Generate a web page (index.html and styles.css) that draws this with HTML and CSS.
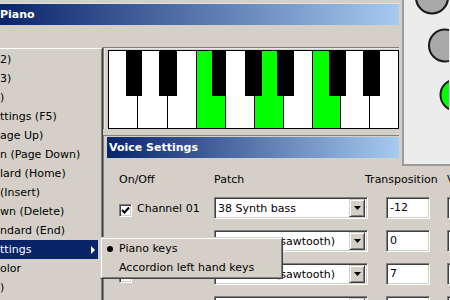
FILE: index.html
```html
<!DOCTYPE html>
<html>
<head>
<meta charset="utf-8">
<title>Piano</title>
<link rel="stylesheet" href="styles.css">
</head>
<body>
<div class="window">
  <div class="frame-top"></div>
  <div class="titlebar"><span class="title">Piano</span></div>
  <div class="menubar"></div>
  <div class="kbd-wrap">
    <svg class="kbd" width="291" height="79" viewBox="0 0 291 79">
      <rect x="0" y="0" width="291" height="79" fill="#fff"/>
      <rect x="88" y="0" width="29" height="79" fill="#00ff00"/>
      <rect x="146" y="0" width="29" height="79" fill="#00ff00"/>
      <rect x="204" y="0" width="28" height="79" fill="#00ff00"/>
      <g stroke="#000" stroke-width="1" fill="none">
        <path d="M29.5 0V79M59.5 0V79M88.5 0V79M117.5 0V79M146.5 0V79M175.5 0V79M204.5 0V79M232.5 0V79M261.5 0V79"/>
        <rect x="0.5" y="0.5" width="290" height="78"/>
      </g>
      <g fill="#000">
        <rect x="18" y="0" width="16" height="46"/>
        <rect x="51" y="0" width="18" height="46"/>
        <rect x="104" y="0" width="14" height="46"/>
        <rect x="137" y="0" width="17" height="46"/>
        <rect x="169" y="0" width="17" height="46"/>
        <rect x="221" y="0" width="17" height="46"/>
        <rect x="255" y="0" width="17" height="46"/>
      </g>
    </svg>
  </div>
  <div class="voice">
    <div class="voice-title">Voice Settings</div>
    <div class="voice-body">
      <div class="vhead">
        <span class="h-on">On/Off</span>
        <span class="h-patch">Patch</span>
        <span class="h-trans">Transposition</span>
        <span class="h-vol">V</span>
      </div>
      <div class="vrow">
        <label class="chan"><span class="cb"><svg width="9" height="9" viewBox="0 0 9 9"><path d="M1 4 L3.5 6.5 L8 1.5" stroke="#000" stroke-width="2" fill="none"/></svg></span><span class="chan-text">Channel 01</span></label>
        <div class="select"><span class="sel-text">38 Synth bass</span><span class="sel-btn"><svg width="7" height="4" viewBox="0 0 7 4"><polygon points="0,0 7,0 3.5,4" fill="#000"/></svg></span></div>
        <div class="field">-12</div>
        <div class="field"></div>
      </div>
      <div class="vrow">
        <label class="chan"><span class="cb"></span><span class="chan-text">Channel 02</span></label>
        <div class="select"><span class="sel-text">81 Lead 2 (sawtooth)</span><span class="sel-btn"><svg width="7" height="4" viewBox="0 0 7 4"><polygon points="0,0 7,0 3.5,4" fill="#000"/></svg></span></div>
        <div class="field">0</div>
        <div class="field"></div>
      </div>
      <div class="vrow">
        <label class="chan"><span class="cb"></span><span class="chan-text">Channel 03</span></label>
        <div class="select"><span class="sel-text">81 Lead 2 (sawtooth)</span><span class="sel-btn"><svg width="7" height="4" viewBox="0 0 7 4"><polygon points="0,0 7,0 3.5,4" fill="#000"/></svg></span></div>
        <div class="field">7</div>
        <div class="field"></div>
      </div>
      <div class="vrow">
        <label class="chan"><span class="cb"></span><span class="chan-text">Channel 04</span></label>
        <div class="select"><span class="sel-text"></span><span class="sel-btn"><svg width="7" height="4" viewBox="0 0 7 4"><polygon points="0,0 7,0 3.5,4" fill="#000"/></svg></span></div>
        <div class="field"></div>
        <div class="field"></div>
      </div>
    </div>
  </div>
</div>

<div class="menu">
  <div class="mi">2)</div>
  <div class="mi">3)</div>
  <div class="mi">)</div>
  <div class="mi">ttings (F5)</div>
  <div class="mi">age Up)</div>
  <div class="mi">n (Page Down)</div>
  <div class="mi">lard (Home)</div>
  <div class="mi">(Insert)</div>
  <div class="mi">wn (Delete)</div>
  <div class="mi">ndard (End)</div>
  <div class="mi active">ttings<span class="arrow"></span></div>
  <div class="mi">olor</div>
  <div class="mi">)</div>
</div>

<div class="submenu">
  <div class="si"><span class="bullet-col"><span class="bullet"></span></span>Piano keys</div>
  <div class="si"><span class="bullet-col"></span>Accordion left hand keys</div>
</div>

<div class="side">
  <div class="side-inner">
    <svg class="lamps" width="45" height="166" viewBox="0 0 45 166">
      <circle cx="28" cy="-2.5" r="16" fill="#a8a8a8" stroke="#1a1a1a" stroke-width="2"/>
      <circle cx="41" cy="45.5" r="16" fill="#a8a8a8" stroke="#1a1a1a" stroke-width="2"/>
      <circle cx="52" cy="95" r="15.5" fill="#00ff00" stroke="#1a1a1a" stroke-width="2"/>
    </svg>
  </div>
</div>
</body>
</html>
```

FILE: styles.css
```css
html, body {
  margin: 0;
  padding: 0;
}
body {
  width: 450px;
  height: 300px;
  overflow: hidden;
  position: relative;
  background: #d4d0c8;
  font-family: "DejaVu Sans", "Liberation Sans", sans-serif;
  font-size: 11px;
  color: #000;
}
.window {
  width: 520px;
}
.frame-top {
  height: 4px;
  background: #d4d0c8;
  box-shadow: inset 0 -1px #e4e2dc;
}
.titlebar {
  height: 21px;
  background: #a6caf0 linear-gradient(to right, #0a246a, #a6caf0) no-repeat;
  background-size: 400px 100%;
}
.title {
  display: block;
  color: #fff;
  font-weight: bold;
  line-height: 21px;
}
.menubar {
  height: 22px;
  background: #d4d0c8;
}
.kbd-wrap {
  margin-left: 103px;
  border-top: 1px solid #808080;
  border-left: 1px solid #808080;
  padding: 2px 0 0 4px;
  background: #d4d0c8;
  box-shadow: inset 1px 1px #e8e8e8;
}
.kbd {
  display: block;
}
.voice {
  margin: 6px 0 0 103px;
  border-top: 1px solid #808080;
  border-left: 1px solid #808080;
  padding: 1px 0 0 3px;
}
.voice-title {
  height: 21px;
  line-height: 21px;
  padding-left: 2px;
  color: #fff;
  font-weight: bold;
  background: #a6caf0 linear-gradient(to right, #0a246a, #a6caf0) no-repeat;
  background-size: 292px 100%;
}
.voice-body {
  padding: 15px 0 0 12px;
}
.vhead {
  display: flex;
  height: 14px;
  line-height: 14px;
  margin-bottom: 10px;
}
.h-on { width: 95px; }
.h-patch { width: 151px; }
.h-trans { width: 82px; }
.vrow {
  display: grid;
  grid-template-columns: 95px 172px 61px 44px;
  height: 22px;
  margin-bottom: 11px;
}
.chan {
  display: flex;
  align-items: flex-start;
  align-self: start;
  margin-top: 7px;
  height: 13px;
  white-space: nowrap;
}
.chan-text {
  line-height: 9px;
}
.cb {
  box-sizing: border-box;
  flex: none;
  width: 13px;
  height: 13px;
  margin-right: 5px;
  background: #fff;
  border: 1px solid;
  border-color: #808080 #fff #fff #808080;
  box-shadow: inset 1px 1px #404040, inset -1px -1px #d4d0c8;
  display: flex;
  align-items: center;
  justify-content: center;
}
.cb svg { display: block; }
.select {
  box-sizing: border-box;
  width: 154px;
  height: 22px;
  background: #fff;
  border: 1px solid;
  border-color: #808080 #fff #fff #808080;
  box-shadow: inset 1px 1px #404040, inset -1px -1px #d4d0c8;
  padding: 2px;
  display: flex;
  align-items: center;
}
.sel-text {
  flex: 1;
  padding-left: 1px;
  white-space: nowrap;
  overflow: hidden;
}
.sel-btn {
  box-sizing: border-box;
  width: 16px;
  height: 18px;
  background: #d4d0c8;
  border: 1px solid;
  border-color: #d4d0c8 #404040 #404040 #d4d0c8;
  box-shadow: inset 1px 1px #fff, inset -1px -1px #808080;
  display: flex;
  align-items: center;
  justify-content: center;
}
.sel-btn svg { display: block; }
.field {
  box-sizing: border-box;
  width: 44px;
  height: 22px;
  background: #fff;
  border: 1px solid;
  border-color: #808080 #fff #fff #808080;
  box-shadow: inset 1px 1px #404040, inset -1px -1px #d4d0c8;
  padding: 0 3px;
  line-height: 20px;
}

/* dropdown menu */
.menu {
  position: absolute;
  left: 0;
  top: 47px;
  width: 103px;
  height: 253px;
  box-sizing: border-box;
  background: #d4d0c8;
  border-top: 1px solid #d4d0c8;
  border-right: 1px solid #404040;
  box-shadow: inset 0 1px #fff, inset -1px 0 #808080;
  padding: 2px 4px 0 0;
}
.mi {
  height: 19px;
  line-height: 19px;
  white-space: nowrap;
  display: flex;
  align-items: center;
}
.mi.active {
  background: #0a246a;
  color: #fff;
}
.arrow {
  margin-left: auto;
  margin-right: 3px;
  width: 0;
  height: 0;
  border-left: 4px solid #fff;
  border-top: 4px solid transparent;
  border-bottom: 4px solid transparent;
}
.submenu {
  position: absolute;
  left: 100px;
  top: 237px;
  width: 183px;
  height: 42px;
  box-sizing: border-box;
  background: #d4d0c8;
  border: 1px solid;
  border-color: #d4d0c8 #404040 #404040 #d4d0c8;
  box-shadow: inset 1px 1px #fff, inset -1px -1px #808080;
  padding-top: 1px;
}
.si {
  height: 19px;
  line-height: 19px;
  display: flex;
  align-items: center;
  white-space: nowrap;
}
.bullet-col {
  width: 18px;
  display: flex;
  align-items: center;
}
.bullet {
  width: 6px;
  height: 6px;
  border-radius: 50%;
  background: #000;
  margin-left: 6px;
}

/* side panel with lamps */
.side {
  position: absolute;
  left: 399px;
  top: 0;
  width: 51px;
  height: 168px;
  box-sizing: border-box;
  background: #d4d0c8;
  padding: 0 0 2px 3px;
}
.side-inner {
  height: 100%;
  box-sizing: border-box;
  border-left: 2px solid #9c9c9c;
  border-bottom: 2px solid #9c9c9c;
  background: #ececec;
  overflow: hidden;
}
.lamps {
  display: block;
  overflow: hidden;
}
```
